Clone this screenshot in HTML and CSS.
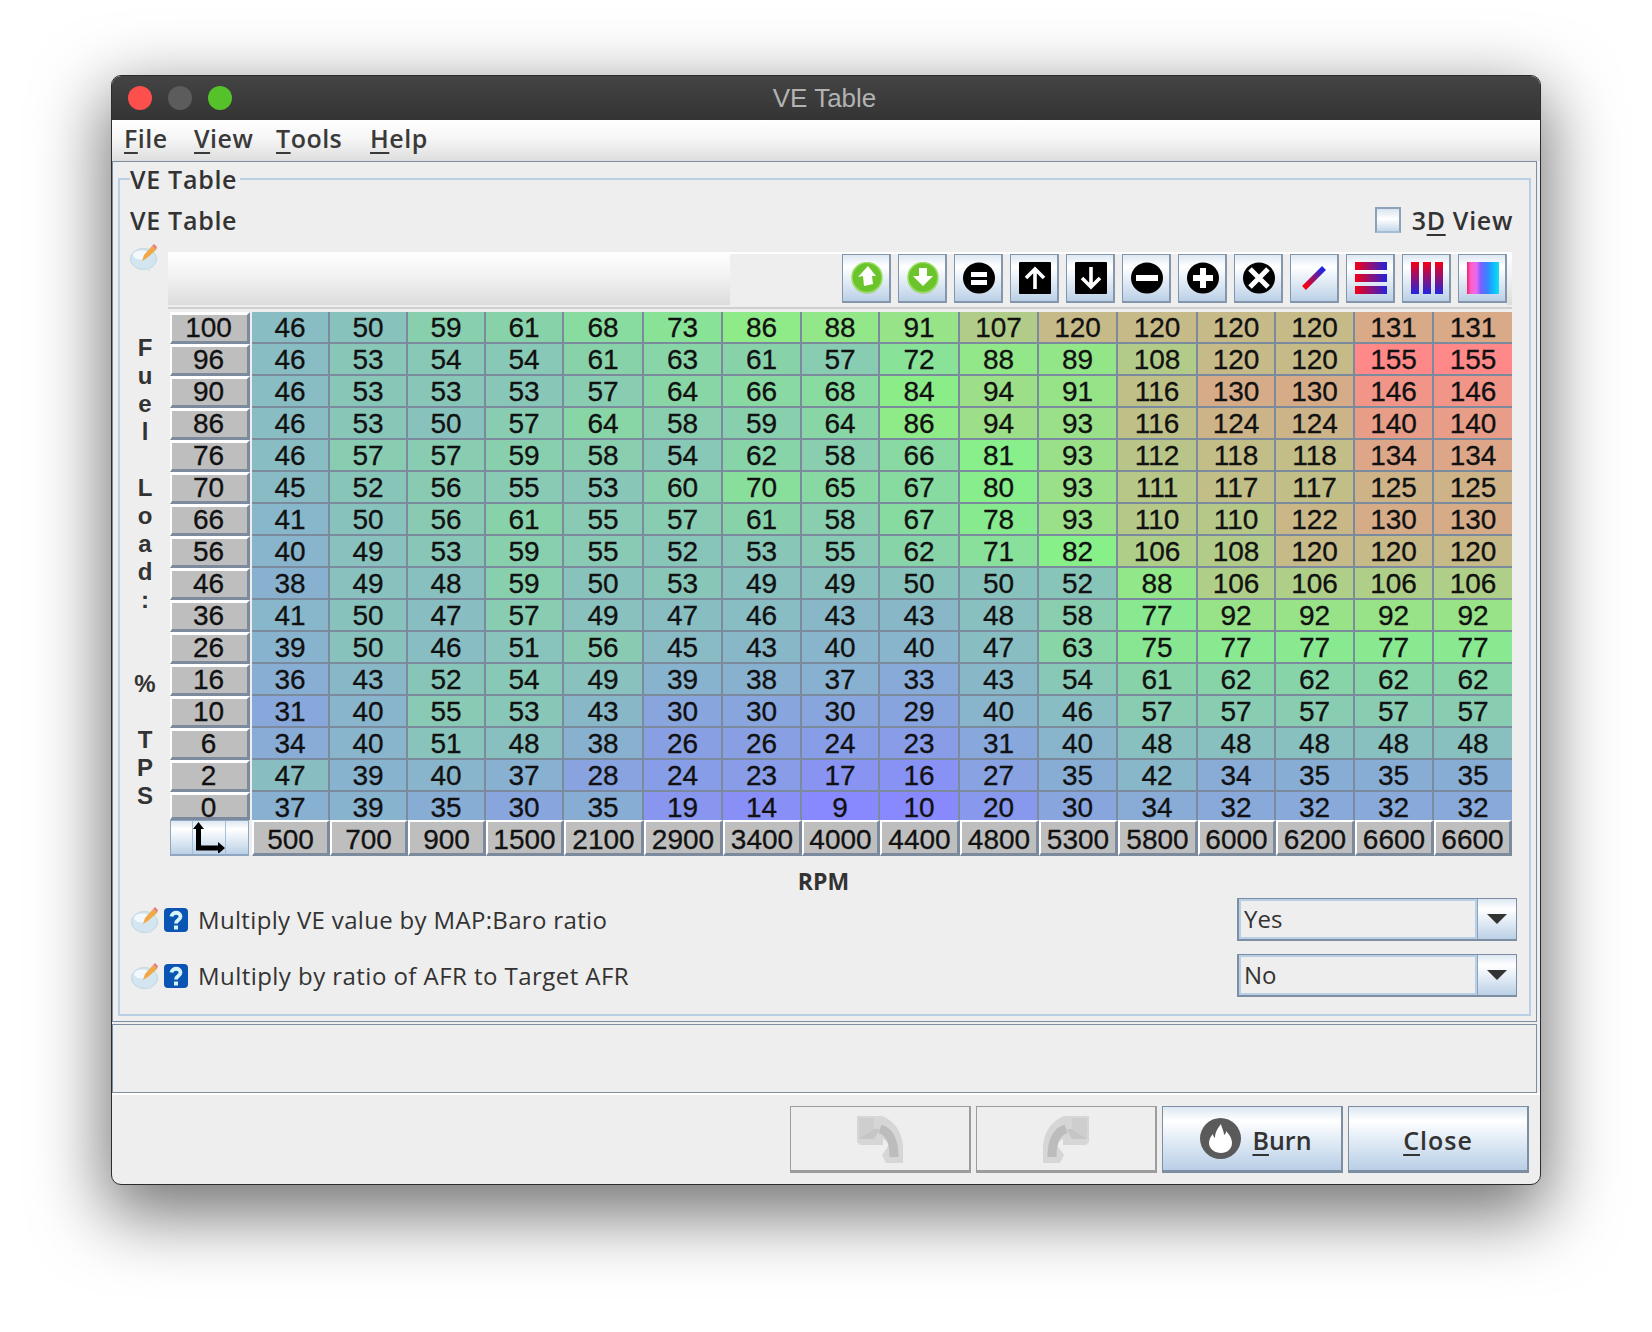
FILE: index.html
```html
<!DOCTYPE html>
<html lang="en">
<head>
    <meta charset="UTF-8">
    <title>VE Table</title>
    <link rel="stylesheet" href="styles.css">
</head>
<body>

    <svg class="defs" width="0" height="0">
        <defs>
            <symbol id="note" viewBox="0 0 29 28">
                <ellipse cx="13.5" cy="16" rx="13" ry="10.5" fill="#d3e6f0" stroke="#bcd6e4"/>
                <ellipse cx="11" cy="12" rx="8" ry="4.5" fill="#f2f8fb"/>
                <path d="M16 25l4 3v-5z" fill="#cfe3ee"/>
                <path d="M12 18l2-6 8-9 4 4-9 8z" fill="#f0a848"/>
                <path d="M22 3l2-2 3 3-1 3z" fill="#e8807a"/>
            </symbol>
            <symbol id="help" viewBox="0 0 24 24">
                <rect width="24" height="24" rx="4" fill="#0a54b4"/>
                <path d="M7.5 8.5C8 3.5 16.5 3.5 16.5 8.5c0 3.5-4.5 3.5-4.5 7" fill="none" stroke="#d6f4f8" stroke-width="3.8"/>
                <rect x="10" y="17.5" width="4" height="4" fill="#d6f4f8"/>
            </symbol>
            <linearGradient id="rb-h"><stop offset="0" stop-color="#f60014"/><stop offset="1" stop-color="#2424dc"/></linearGradient>
            <linearGradient id="rb-v" x2="0" y2="1"><stop offset="0" stop-color="#f60014"/><stop offset="1" stop-color="#2424dc"/></linearGradient>
            <linearGradient id="rb-d" gradientUnits="userSpaceOnUse" x1="5" y1="26" x2="25" y2="6"><stop offset="0.1" stop-color="#f60014"/><stop offset="0.9" stop-color="#2424dc"/></linearGradient>
            <linearGradient id="rainbow">
                <stop offset="0" stop-color="#f0206a"/><stop offset="0.12" stop-color="#ff60c8"/>
                <stop offset="0.3" stop-color="#e868f0"/><stop offset="0.42" stop-color="#8060ff"/>
                <stop offset="0.62" stop-color="#3a80ff"/><stop offset="0.82" stop-color="#10b8ff"/>
                <stop offset="1" stop-color="#10e0f0"/>
            </linearGradient>
            <symbol id="pipe" viewBox="0 0 48 48">
                <path d="M1 1H26Q44 8 47 30V48H30L26 40 33 30Q32 26 27 24V30H4L1 27Z" fill="#d6d6d6"/>
                <path d="M24 14Q38 18 38 42" fill="none" stroke="#bcbcbc" stroke-width="9"/>
                <path d="M3 3H18V24H3Z" fill="#cecece"/>
                <path d="M3 24H18L24 14H18" fill="#c6c6c6"/>
            </symbol>
        </defs>
    </svg>

    <div class="window">
        <div class="titlebar">
            <div class="lights">
                <span class="light red"></span>
                <span class="light grey"></span>
                <span class="light green"></span>
            </div>
            <div class="title">VE Table</div>
        </div>

        <div class="menubar">
            <span class="menu m-file"><u>F</u>ile</span>
            <span class="menu m-view"><u>V</u>iew</span>
            <span class="menu m-tools"><u>T</u>ools</span>
            <span class="menu m-help"><u>H</u>elp</span>
        </div>

        <div class="panel">
            <fieldset class="group">
                <legend>VE Table</legend>

                <div class="head">
                    <span class="strong">VE Table</span>
                    <label class="check"><span class="box"></span><span class="strong">3<u>D</u> View</span></label>
                </div>

                <div class="toolrow">
                    <svg class="note up"><use href="#note"/></svg>
                    <div class="toolbar">
                        <div class="tool-blank"></div>
                        <div class="tools">
                            <button class="tool"><svg viewBox="0 0 32 32"><ellipse cx="16" cy="17" rx="15" ry="15" fill="#bbb"/><circle cx="16" cy="15.5" r="15" fill="#6cc42c" stroke="#9ade62" stroke-width="1.5"/><path d="M17 4l8 10h-4l1 8-9 2-1-10-5 1z" fill="#fff"/></svg></button>
                            <button class="tool"><svg viewBox="0 0 32 32"><ellipse cx="16" cy="17" rx="15" ry="15" fill="#bbb"/><circle cx="16" cy="15.5" r="15" fill="#6cc42c" stroke="#9ade62" stroke-width="1.5"/><path d="M12 6h8v8h6L16 24 6 14h6z" fill="#fff"/></svg></button>
                            <button class="tool"><svg viewBox="0 0 32 32"><ellipse cx="16" cy="16" rx="16" ry="15.5"/><path d="M8 10h16v5H8zM8 18h16v5H8z" fill="#fff"/></svg></button>
                            <button class="tool"><svg viewBox="0 0 32 32"><rect width="32" height="32" rx="1"/><path d="M16 27V7M7 16l9-9 9 9" fill="none" stroke="#fff" stroke-width="3.6"/></svg></button>
                            <button class="tool"><svg viewBox="0 0 32 32"><rect width="32" height="32" rx="1"/><path d="M16 5v20M7 16l9 9 9-9" fill="none" stroke="#fff" stroke-width="3.6"/></svg></button>
                            <button class="tool"><svg viewBox="0 0 32 32"><ellipse cx="16" cy="16" rx="16" ry="15.5"/><path d="M5 13h22v6H5z" fill="#fff"/></svg></button>
                            <button class="tool"><svg viewBox="0 0 32 32"><ellipse cx="16" cy="16" rx="16" ry="15.5"/><path d="M13 6h6v7h7v6h-7v7h-6v-7H6v-6h7z" fill="#fff"/></svg></button>
                            <button class="tool"><svg viewBox="0 0 32 32"><ellipse cx="16" cy="16" rx="16" ry="15.5"/><path d="M7 7l18 18M25 7L7 25" fill="none" stroke="#fff" stroke-width="5"/></svg></button>
                            <button class="tool"><svg viewBox="0 0 32 32"><path d="M5 26L25 6" stroke="url(#rb-d)" stroke-width="5.5"/></svg></button>
                            <button class="tool"><svg viewBox="0 0 32 32"><path d="M0 0h32v8H0zM0 12h32v8H0zM0 24h32v8H0z" fill="url(#rb-h)"/></svg></button>
                            <button class="tool"><svg viewBox="0 0 32 32"><g fill="url(#rb-v)"><rect width="8" height="32"/><rect x="12" width="8" height="32"/><rect x="24" width="8" height="32"/></g></svg></button>
                            <button class="tool"><svg viewBox="0 0 32 32"><rect width="32" height="32" fill="url(#rainbow)"/></svg></button>
                        </div>
                    </div>
                </div>

                <div class="table-wrap">
                    <div class="side">
                        <div>F</div><div>u</div><div>e</div><div>l</div><div>&nbsp;</div>
                        <div>L</div><div>o</div><div>a</div><div>d</div><div>:</div>
                        <div>&nbsp;</div><div>&nbsp;</div><div>%</div><div>&nbsp;</div>
                        <div>T</div><div>P</div><div>S</div>
                    </div>
                    <div class="grid" id="grid"></div>
                </div>

                <div class="xlabel">RPM</div>

                <div class="opt">
                    <svg class="note"><use href="#note"/></svg>
                    <svg class="help"><use href="#help"/></svg>
                    <span class="opt-text">Multiply VE value by MAP:Baro ratio</span>
                    <div class="combo"><span class="combo-val">Yes</span><span class="combo-btn"><i></i></span></div>
                </div>
                <div class="opt">
                    <svg class="note"><use href="#note"/></svg>
                    <svg class="help"><use href="#help"/></svg>
                    <span class="opt-text wide">Multiply by ratio of AFR to Target AFR</span>
                    <div class="combo"><span class="combo-val">No</span><span class="combo-btn"><i></i></span></div>
                </div>
            </fieldset>
        </div>

        <div class="status"></div>

        <div class="footer">
            <button class="btn off"><svg class="pipe"><use href="#pipe"/></svg></button>
            <button class="btn off"><svg class="pipe flip"><use href="#pipe"/></svg></button>
            <button class="btn burn-btn">
                <svg class="burn" viewBox="0 0 41 41"><circle cx="20.5" cy="20.5" r="20.5" fill="#5a5a5a"/><path d="M21 6c1 5 3 7 3 11 2-1 2-3 2-4 4 4 6 8 6 12 0 6-5 10-11 10S9 31 9 25c0-4 2-7 4-9 0 2 1 3 2 4 0-6 3-10 6-14z" fill="#fff"/></svg>
                <span><u>B</u>urn</span>
            </button>
            <button class="btn close-btn"><span><u>C</u>lose</span></button>
        </div>
    </div>

    <script src="table.js"></script>
</body>
</html>
```

FILE: styles.css
```css
*{
    margin: 0;
    padding: 0;
    box-sizing: border-box;
}
body{
    background: #fff;
    font-family: "Open Sans", "Noto Sans", sans-serif;
    font-size: 24px;
    color: #333;
    height: 1332px;
    overflow: hidden;
}
u{
    text-underline-offset: 4px;
    text-decoration-thickness: 2px;
}
.defs{
    display: block;
    height: 0;
}
.strong{
    font-weight: 600;
    letter-spacing: 0.7px;
}

.window{
    width: 1430px;
    height: 1110px;
    margin: 75px 0 0 111px;
    background: #eee;
    border: 1px solid #2c2c2c;
    border-radius: 10px;
    overflow: hidden;
    box-shadow: 0 24px 70px 6px rgba(0,0,0,.55);
}

.titlebar{
    height: 44px;
    background: linear-gradient(#444, #343434);
    display: grid;
    grid-template-columns: 1fr auto 1fr;
    align-items: center;
}
.lights{
    display: flex;
    gap: 16px;
    padding-left: 16px;
}
.light{
    width: 24px;
    height: 24px;
    border-radius: 50%;
}
.red{ background: #fd4f4c; }
.grey{ background: #5c5c5c; }
.green{ background: #55c22a; }
.title{
    grid-column: 2;
    font-family: "Liberation Sans", sans-serif;
    font-size: 26px;
    color: #b2b2b2;
    padding-right: 3px;
}

.menubar{
    height: 41px;
    background: linear-gradient(#fff, #f6f6f6 45%, #dedede);
    display: flex;
    align-items: center;
    padding: 0 0 6px 12px;
    font-size: 25px;
    font-weight: 600;
    letter-spacing: 0.5px;
    color: #3a3a3a;
}
.m-file{ width: 70px; }
.m-view{ width: 82px; }
.m-tools{ width: 94px; }

.panel{
    width: 1425px;
    height: 861px;
    border: 1px solid #7d8ea3;
    padding: 2px 5px 0;
    background: #eee;
}
.group{
    border: 2px solid #b9cfe6;
    height: 852px;
    padding: 0 12px 0 10px;
    min-width: 0;
}
.group legend{
    font-weight: 600;
    font-size: 25px;
    line-height: 30px;
    letter-spacing: 0.7px;
    padding: 0 3px 0 0;
    color: #333;
}

.head{
    height: 40px;
    margin: 6px 4px 12px 0;
    display: flex;
    justify-content: space-between;
    align-items: center;
    font-size: 25px;
}
.check{
    display: flex;
    align-items: center;
    gap: 11px;
}
.box{
    width: 26px;
    height: 26px;
    border: 2px solid #8da2b8;
    border-bottom-color: #a5bdd6;
    background: linear-gradient(#d9e4ef, #fff 45%, #c5d7e9);
}

.toolrow{
    display: flex;
    margin-right: 5px;
    margin-bottom: 3px;
}
.note{
    width: 29px;
    height: 28px;
    flex: none;
}
.up{
    margin: -9px 9px 0 0;
}
.toolbar{
    flex: 1;
    height: 57px;
    display: flex;
    padding-bottom: 2px;
    border-bottom: 2px solid #cfcfcf;
    background: linear-gradient(#fff, #f2f2f2 45%, #dcdcdc) content-box;
}
.tool-blank{
    width: 562px;
}
.tools{
    flex: 1;
    display: flex;
    justify-content: flex-end;
    gap: 7px;
    margin-right: 5px;
    background: #eee;
    border-top: 2px solid #fff;
}
.tool{
    width: 49px;
    height: 49px;
    padding-left: 2px;
    border: 1px solid #8496ab;
    border-right-width: 2px;
    border-bottom-width: 2px;
    background: linear-gradient(#dde8f2, #fff 25%, #e4edf6 55%, #bbd0e6);
    display: flex;
    align-items: center;
    justify-content: center;
}
.tool svg{
    width: 32px;
    height: 32px;
}

.table-wrap{
    display: flex;
    margin-right: 5px;
}
.side{
    width: 40px;
    padding: 22px 10px 0 0;
    text-align: center;
    font-family: "Liberation Sans", sans-serif;
    font-size: 24px;
    font-weight: 700;
    line-height: 28px;
}
.grid{
    flex: 1;
    display: grid;
    grid-template-columns: 82px 78px 78px 78px 78px 80px 79px 79px 78px 80px 79px 79px 80px 78px 79px 79px 78px;
    grid-template-rows: repeat(15, 32px) 28px 36px;
    font-family: "Liberation Sans", sans-serif;
    font-size: 28px;
    color: #111;
    text-align: center;
    overflow: hidden;
    -webkit-text-stroke: 0.3px #111;
}
.cell{
    line-height: 32px;
    border-right: 2px solid #7b8a9c;
    border-bottom: 2px solid #7b8a9c;
}
.cell.last-col{ border-right: 0; }
.cell.last-row{ border-bottom: 0; }
.yaxis{
    background: #bebebe;
    border: 0 solid #7b8a9c;
    border-width: 3px 3px 3px 2px;
    border-top-color: #fff;
    border-left-color: #fff;
    margin-right: 2px;
    padding-right: 2px;
    line-height: 26px;
}
.xaxis{
    background: #bebebe;
    border: 0 solid #7b8a9c;
    border-width: 2px 3px 3px 2px;
    border-top-color: #fff;
    border-left-color: #fff;
    line-height: 35px;
}
.corner{
    margin-right: 3px;
    border: 1px solid #8ea6c0;
    border-bottom-width: 2px;
    display: flex;
    background: linear-gradient(#dde8f2, #fff 25%, #e4edf6 55%, #bbd0e6);
}
.corner-mid{
    width: 34px;
    margin-left: 21px;
    border-left: 1px solid #a7bfd8;
    border-right: 1px solid #a7bfd8;
    flex: none;
}
.corner svg{
    display: block;
    width: 32px;
    height: 32px;
}

.xlabel{
    height: 42px;
    line-height: 50px;
    text-align: center;
    font-size: 23px;
    font-weight: 700;
}

.opt{
    height: 43px;
    margin-bottom: 13px;
    display: flex;
    align-items: center;
    padding-left: 1px;
}
.help{
    width: 24px;
    height: 24px;
    margin: 0 10px 0 4px;
    flex: none;
}
.opt-text{
    flex: 1;
    line-height: 50px;
    letter-spacing: 0.33px;
}
.opt-text.wide{
    letter-spacing: 0.45px;
}
.combo{
    width: 280px;
    height: 43px;
    display: flex;
    border: 2px solid #7d8ea3;
    border-width: 1px 1px 2px 2px;
}
.combo-val{
    flex: 1;
    padding-left: 3px;
    line-height: 36px;
    border: 2px solid #b9cfe6;
}
.combo-btn{
    width: 39px;
    display: flex;
    align-items: center;
    justify-content: center;
    border-left: 1px solid #8ea6c0;
    background: linear-gradient(#dde8f2, #fff 25%, #e4edf6 55%, #bbd0e6);
}
.combo-btn i{
    border-style: solid;
    border-width: 10px 10px 0;
    border-color: #333 transparent transparent;
}

.status{
    width: 1425px;
    height: 69px;
    margin-top: 2px;
    border: 1px solid #7d8ea3;
}
.footer{
    display: flex;
    justify-content: flex-end;
    gap: 5px;
    padding: 11px 11px 0 0;
    border-top: 2px solid #fff;
}
.btn{
    width: 181px;
    height: 67px;
    padding-top: 2px;
    border: 1px solid #7d8ea3;
    border-bottom-width: 3px;
    border-right-width: 2px;
    background: linear-gradient(#dde8f2, #fff 22%, #e4edf6 50%, #b9cfe7);
    display: flex;
    align-items: center;
    justify-content: center;
    gap: 11px;
    font-family: inherit;
    font-size: 25px;
    font-weight: 600;
    color: #333;
    letter-spacing: 0.5px;
}
.btn.off{
    background: none;
    border-color: #9c9c9c;
    padding-top: 0;
}
.burn-btn{
    padding-left: 8px;
    letter-spacing: 0;
}
.burn-btn .burn{
    margin-top: -2px;
}
.close-btn{
    letter-spacing: 1px;
}
.pipe{
    width: 48px;
    height: 48px;
}
.flip{
    transform: scaleX(-1);
}
.burn{
    width: 41px;
    height: 41px;
}
```

FILE: table.js
```js
var aLoad=[100,96,90,86,76,70,66,56,46,36,26,16,10,6,2,0];
var aRpm=[500,700,900,1500,2100,2900,3400,4000,4400,4800,5300,5800,6000,6200,6600,6600];
var aVe=[
    [46,50,59,61,68,73,86,88,91,107,120,120,120,120,131,131],
    [46,53,54,54,61,63,61,57,72,88,89,108,120,120,155,155],
    [46,53,53,53,57,64,66,68,84,94,91,116,130,130,146,146],
    [46,53,50,57,64,58,59,64,86,94,93,116,124,124,140,140],
    [46,57,57,59,58,54,62,58,66,81,93,112,118,118,134,134],
    [45,52,56,55,53,60,70,65,67,80,93,111,117,117,125,125],
    [41,50,56,61,55,57,61,58,67,78,93,110,110,122,130,130],
    [40,49,53,59,55,52,53,55,62,71,82,106,108,120,120,120],
    [38,49,48,59,50,53,49,49,50,50,52,88,106,106,106,106],
    [41,50,47,57,49,47,46,43,43,48,58,77,92,92,92,92],
    [39,50,46,51,56,45,43,40,40,47,63,75,77,77,77,77],
    [36,43,52,54,49,39,38,37,33,43,54,61,62,62,62,62],
    [31,40,55,53,43,30,30,30,29,40,46,57,57,57,57,57],
    [34,40,51,48,38,26,26,24,23,31,40,48,48,48,48,48],
    [47,39,40,37,28,24,23,17,16,27,35,42,34,35,35,35],
    [37,39,35,30,35,19,14,9,10,20,30,34,32,32,32,32]
];
var oGrid=document.getElementById("grid");

// blue at the lowest value, green in the middle, red at the highest
function cellColor(v) {
    var mid=82, t;
    if(v<=mid){
        t=(v-9)/(mid-9);
        return "rgb(136,"+Math.round(136+104*t)+","+Math.round(255-119*t)+")";
    }
    t=(v-mid)/(155-mid);
    return "rgb("+Math.round(136+119*t)+","+Math.round(240-104*t)+",136)";
}

function addDiv(sClass,sText) {
    var oDiv=document.createElement("div");
    oDiv.className=sClass;
    oDiv.textContent=sText;
    oGrid.appendChild(oDiv);
    return oDiv;
}

for(var r=0;r<aVe.length;r++){
    addDiv("yaxis",aLoad[r]);
    for(var c=0;c<aVe[r].length;c++){
        var sClass="cell";
        if(c==15){sClass+=" last-col"}
        if(r==15){sClass+=" last-row"}
        addDiv(sClass,aVe[r][c]).style.background=cellColor(aVe[r][c]);
    }
}

var oCorner=addDiv("corner","");
oCorner.innerHTML='<div class="corner-mid"><svg viewBox="0 0 32 32"><path d="M5.5 5V27H27" fill="none" stroke="#000" stroke-width="5"/><path d="M0 8L5.5 1 11 8zM25 21L32 27 25 33z"/></svg></div>';
for(var i=0;i<aRpm.length;i++){
    addDiv("xaxis",aRpm[i]);
}
```
